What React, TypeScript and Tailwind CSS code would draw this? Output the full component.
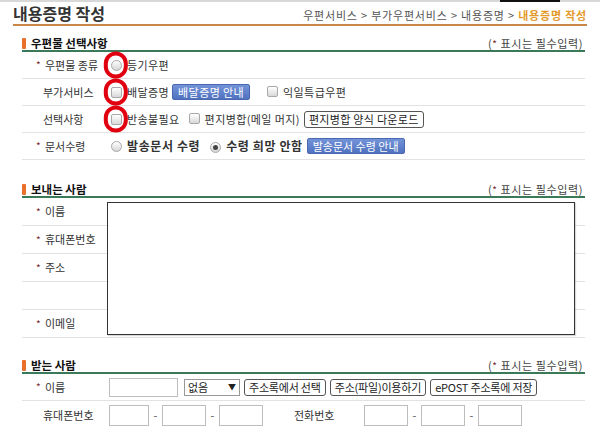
import React from "react";

function Star() {
  return <span className="inline-block w-[9px] text-[#7a2a2a] text-[10px]">*</span>;
}

function Check({ circled = false }: { circled?: boolean }) {
  return (
    <span className="relative inline-flex items-center justify-center w-[11px] h-[11px] shrink-0">
      <span className="w-[11px] h-[11px] border border-[#a8a8a8] rounded-[2px] bg-gradient-to-b from-white to-[#d9d9d9]" />
      {circled && (
        <span className="absolute left-1/2 top-1/2 -translate-x-[55%] -translate-y-1/2 w-[24px] h-[27px] rounded-full border-[4px] border-[#e0000f]" />
      )}
    </span>
  );
}

function Radio({ checked = false, circled = false }: { checked?: boolean; circled?: boolean }) {
  return (
    <span className="relative inline-flex items-center justify-center w-[11px] h-[11px] shrink-0">
      <span className="flex items-center justify-center w-[11px] h-[11px] border border-[#a8a8a8] rounded-full bg-gradient-to-b from-white to-[#d6d6d6]">
        {checked && <span className="w-[5px] h-[5px] rounded-full bg-[#444]" />}
      </span>
      {circled && (
        <span className="absolute left-1/2 top-1/2 -translate-x-[55%] -translate-y-1/2 w-[24px] h-[27px] rounded-full border-[4px] border-[#e0000f]" />
      )}
    </span>
  );
}

function BlueBtn({ children }: { children: React.ReactNode }) {
  return (
    <span className="inline-flex items-center h-[16px] px-[5px] rounded-[2px] border border-[#4a68b0] bg-gradient-to-b from-[#7393d8] to-[#5072c0] text-white text-[11px] leading-none">
      {children}
    </span>
  );
}

function LineBtn({ children, wide = false }: { children: React.ReactNode; wide?: boolean }) {
  return (
    <span
      className={`inline-flex items-center h-[17px] px-[4px] rounded-[3px] border border-[#555] bg-white text-[#222] text-[11px] leading-none ${
        wide ? "tracking-[0.3px]" : "tracking-[-0.2px]"
      }`}
    >
      {children}
    </span>
  );
}

function Box({ w }: { w: string }) {
  return <span className={`inline-block h-[21px] border border-[#bdbdbd] bg-white ${w}`} />;
}

function SectionHead({ title, className = "" }: { title: string; className?: string }) {
  return (
    <div className={`flex items-center justify-between h-[15px] border-b-2 border-[#3b7a59] ${className}`}>
      <div className="flex items-center gap-[5px]">
        <span className="w-[4px] h-[11px] rounded-[1px] bg-[#e8702a]" />
        <span className="text-[11.5px] font-bold text-[#111] leading-none">{title}</span>
      </div>
      <span className="text-[11px] text-[#444] leading-none pr-[2px] tracking-[0.6px]">
        (<span className="text-[#7a2a2a] text-[10px]">*</span> 표시는 필수입력)
      </span>
    </div>
  );
}

function Label({ star = false, children }: { star?: boolean; children: React.ReactNode }) {
  return (
    <div className="w-[86px] shrink-0 pl-[14px] flex items-center text-[11px] text-[#333] leading-none">
      {star ? <Star /> : <span className="inline-block w-[7px]" />}
      {children}
    </div>
  );
}

export default function App() {
  return (
    <div className="w-[600px] h-[433px] overflow-hidden bg-white font-['Noto_Sans_CJK_KR',sans-serif] text-[#333]">
      <div className="flex h-[2px]">
        <div className="flex-1 bg-[#d8d8d8]" />
        <div className="w-[60px] bg-[#111]" />
        <div className="w-[40px] bg-[#d8d8d8]" />
      </div>

      <div className="mx-[13px] h-[24px] flex items-center justify-between border-b-[2px] border-[#c8874a]">
        <span className="text-[16px] font-bold text-[#333] leading-none">내용증명 작성</span>
        <span className="text-[11px] text-[#555] leading-none pt-[4px] tracking-[0.8px]">
          우편서비스 &gt; 부가우편서비스 &gt; 내용증명 &gt;{" "}
          <span className="font-bold text-[#e39a2a]">내용증명 작성</span>
        </span>
      </div>

      <div className="ml-[22px] w-[563px]">
        <SectionHead title="우편물 선택사항" className="mt-[11px]" />
        <div className="flex h-[27px] border-b border-[#e2e2e2]">
          <Label star>우편물 종류</Label>
          <div className="flex items-center pl-[3px] gap-[5px] text-[11px] leading-none tracking-[0.4px]">
            <Radio circled />
            <span>등기우편</span>
          </div>
        </div>
        <div className="flex h-[27px] border-b border-[#e2e2e2]">
          <Label>부가서비스</Label>
          <div className="flex items-center pl-[3px] text-[11px] leading-none tracking-[0.4px]">
            <Check circled />
            <span className="ml-[5px]">배달증명</span>
            <span className="ml-[3px]">
              <BlueBtn>배달증명 안내</BlueBtn>
            </span>
            <span className="ml-[17px]">
              <Check />
            </span>
            <span className="ml-[5px]">익일특급우편</span>
          </div>
        </div>
        <div className="flex h-[27px] border-b border-[#e2e2e2]">
          <Label>선택사항</Label>
          <div className="flex items-center pl-[3px] text-[11px] leading-none tracking-[0.4px]">
            <Check circled />
            <span className="ml-[5px]">반송불필요</span>
            <span className="ml-[9px]">
              <Check />
            </span>
            <span className="ml-[5px]">편지병합(메일 머지)</span>
            <span className="ml-[4px]">
              <LineBtn wide>편지병합 양식 다운로드</LineBtn>
            </span>
          </div>
        </div>
        <div className="flex h-[27px] border-b border-[#e2e2e2]">
          <Label star>문서수령</Label>
          <div className="flex items-center pl-[3px] text-[12px] leading-none">
            <Radio />
            <span className="ml-[5px] font-semibold tracking-[0.6px]">발송문서 수령</span>
            <span className="ml-[10px]">
              <Radio checked />
            </span>
            <span className="ml-[5px] font-semibold tracking-[0.6px]">수령 희망 안함</span>
            <span className="ml-[4px]">
              <BlueBtn>발송문서 수령 안내</BlueBtn>
            </span>
          </div>
        </div>

        <SectionHead title="보내는 사람" className="mt-[23px]" />
        <div className="relative">
          {[
            ["이름", true],
            ["휴대폰번호", true],
            ["주소", true],
            ["", false],
            ["이메일", true],
          ].map(([t, s], i) => (
            <div key={i} className="flex h-[28px] border-b border-[#e2e2e2] last:border-b-0">
              {t ? <Label star={s as boolean}>{t as string}</Label> : <div className="w-[86px]" />}
            </div>
          ))}
          <div className="absolute left-[85px] top-[4px] w-[468px] h-[133px] bg-white border border-[#333] shadow-[1px_1px_1px_rgba(0,0,0,0.15)]" />
        </div>

        <SectionHead title="받는 사람" className="mt-[21px]" />
        <div className="flex h-[27px] border-b border-[#e2e2e2]">
          <Label star>이름</Label>
          <div className="flex items-center pl-[1px] text-[11px] leading-none">
            <span className="inline-block w-[69px] h-[19px] border border-[#bdbdbd]" />
            <span className="ml-[6px] inline-flex items-center justify-between w-[56px] h-[17px] px-[3px] border border-[#999] text-[#222]">
              <span>없음</span>
              <span className="text-[8px]">▼</span>
            </span>
            <span className="ml-[4px]">
              <LineBtn>주소록에서 선택</LineBtn>
            </span>
            <span className="ml-[4px]">
              <LineBtn>주소(파일)이용하기</LineBtn>
            </span>
            <span className="ml-[4px]">
              <LineBtn>ePOST 주소록에 저장</LineBtn>
            </span>
          </div>
        </div>
        <div className="flex h-[28px]">
          <Label>휴대폰번호</Label>
          <div className="flex items-center pl-[1px] text-[11px] leading-none text-[#555]">
            <Box w="w-[40px]" />
            <span className="w-[13px] text-center">-</span>
            <Box w="w-[44px]" />
            <span className="w-[13px] text-center">-</span>
            <Box w="w-[44px]" />
            <span className="ml-[31px] w-[70px] text-[#333]">전화번호</span>
            <Box w="w-[44px]" />
            <span className="w-[13px] text-center">-</span>
            <Box w="w-[44px]" />
            <span className="w-[13px] text-center">-</span>
            <Box w="w-[44px]" />
          </div>
        </div>
      </div>
    </div>
  );
}
